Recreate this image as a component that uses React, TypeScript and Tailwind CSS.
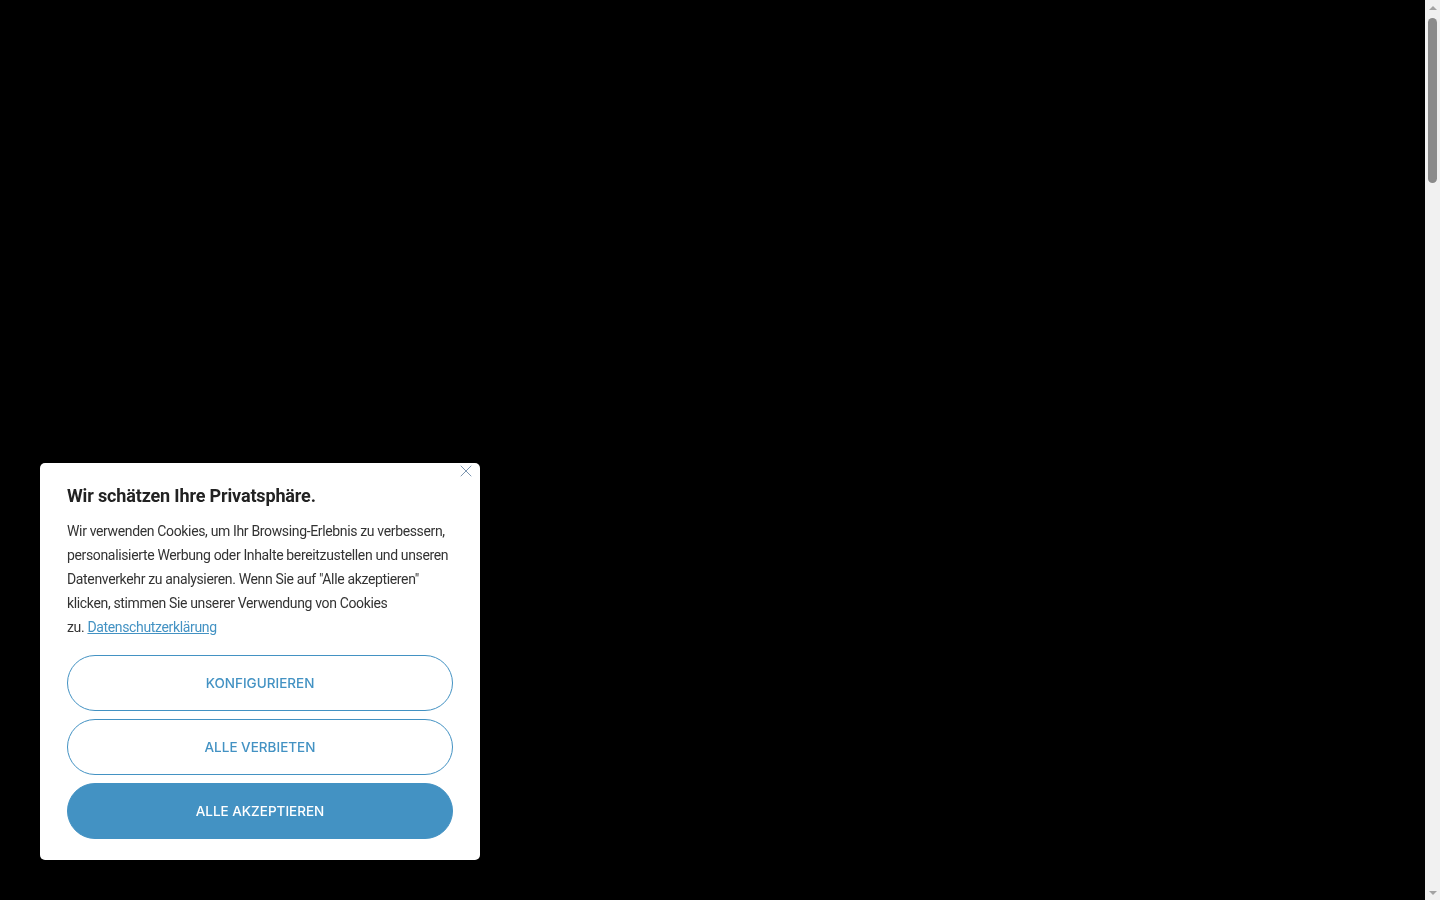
import { X } from "lucide-react";

const BODY_FONT = "font-['Roboto',sans-serif]";

function Scrollbar() {
  return (
    <div className="sticky top-0 flex h-screen w-[15px] shrink-0 flex-col items-center bg-[#f1f1f1]">
      <div className="flex h-[15px] w-full items-center justify-center">
        <div className="h-0 w-0 border-x-[4px] border-b-[4px] border-x-transparent border-b-[#a3a3a3]" />
      </div>
      <div className="mt-[3px] h-[165px] w-[9px] rounded-full bg-[#8b8b8b]" />
      <div className="flex-1" />
      <div className="flex h-[15px] w-full items-center justify-center">
        <div className="h-0 w-0 border-x-[4px] border-t-[4px] border-x-transparent border-t-[#a3a3a3]" />
      </div>
    </div>
  );
}

export default function App() {
  return (
    <div className="flex w-full bg-black">
      <div className="min-h-[4740px] flex-1 bg-black" />
      <Scrollbar />

      {/* Cookie consent banner */}
      <div className="fixed bottom-10 left-10 w-[440px] rounded-[5px] bg-white px-[27px] pb-[21px] pt-[21px] shadow-[0_0_8px_rgba(0,0,0,0.4)]">
        <button
          type="button"
          aria-label="Schließen"
          className="absolute right-[6px] top-0 flex h-[16px] w-[16px] items-center justify-center text-[#7d97b1]"
        >
          <X className="h-[20px] w-[20px] shrink-0" strokeWidth={1.2} />
        </button>

        <h2 className={`${BODY_FONT} text-[18px] font-bold leading-[24px] tracking-[-0.15px] text-[#222]`}>
          Wir schätzen Ihre Privatsphäre.
        </h2>

        <p className={`${BODY_FONT} mt-[11px] text-[14px] leading-[24px] tracking-[-0.35px] text-[#333]`}>
          Wir verwenden Cookies, um Ihr Browsing-Erlebnis zu verbessern, personalisierte Werbung oder
          Inhalte bereitzustellen und unseren Datenverkehr zu analysieren. Wenn Sie auf "Alle
          akzeptieren" klicken, stimmen Sie unserer Verwendung von Cookies{" "}
          <span className="whitespace-nowrap">
            zu.{" "}
            <a href="#" className="text-[#4392c3] underline">
              Datenschutzerklärung
            </a>
          </span>
        </p>

        <div className="mt-[16px] flex flex-col gap-2 font-['Inter',sans-serif] text-[13.5px] font-medium">
          <button
            type="button"
            className="h-[56px] w-full rounded-full border border-[#4392c3] bg-white uppercase text-[#4392c3]"
          >
            Konfigurieren
          </button>
          <button
            type="button"
            className="h-[56px] w-full rounded-full border border-[#4392c3] bg-white uppercase text-[#4392c3]"
          >
            Alle verbieten
          </button>
          <button
            type="button"
            className="h-[56px] w-full rounded-full border border-[#4392c3] bg-[#4392c3] uppercase text-white"
          >
            Alle akzeptieren
          </button>
        </div>
      </div>
    </div>
  );
}
